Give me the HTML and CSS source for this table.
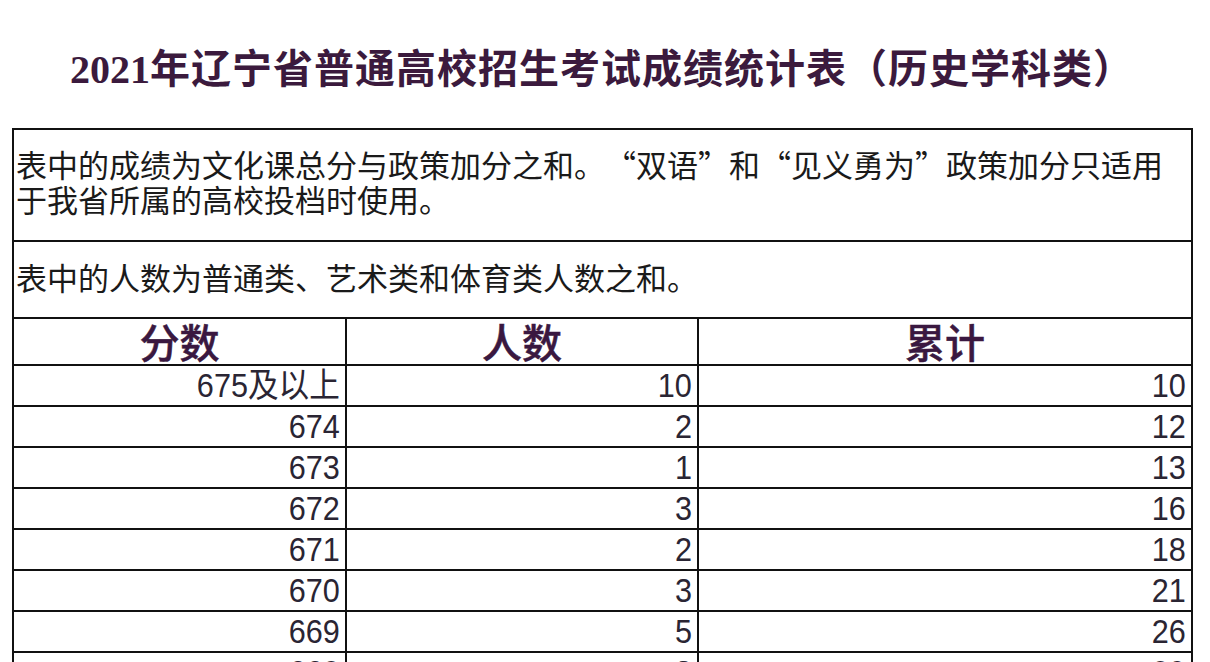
FILE: index.html
```html
<!DOCTYPE html>
<html lang="zh-CN">
<head>
<meta charset="utf-8">
<title>2021年辽宁省普通高校招生考试成绩统计表（历史学科类）</title>
<link rel="stylesheet" href="styles.css">
</head>
<body>
<h1 class="title"><span class="title-num">2021</span>年辽宁省普通高校招生考试成绩统计表（历史学科类）</h1>
<div class="sheet">
  <div class="note note-1">表中的成绩为文化课总分与政策加分之和。“双语”和“见义勇为”政策加分只适用<br>于我省所属的高校投档时使用。</div>
  <div class="note note-2">表中的人数为普通类、艺术类和体育类人数之和。</div>
  <div class="head">分数</div>
  <div class="head">人数</div>
  <div class="head">累计</div>
  <div class="cell"><span class="val">675及以上</span></div><div class="cell"><span class="val">10</span></div><div class="cell"><span class="val">10</span></div>
  <div class="cell"><span class="val">674</span></div><div class="cell"><span class="val">2</span></div><div class="cell"><span class="val">12</span></div>
  <div class="cell"><span class="val">673</span></div><div class="cell"><span class="val">1</span></div><div class="cell"><span class="val">13</span></div>
  <div class="cell"><span class="val">672</span></div><div class="cell"><span class="val">3</span></div><div class="cell"><span class="val">16</span></div>
  <div class="cell"><span class="val">671</span></div><div class="cell"><span class="val">2</span></div><div class="cell"><span class="val">18</span></div>
  <div class="cell"><span class="val">670</span></div><div class="cell"><span class="val">3</span></div><div class="cell"><span class="val">21</span></div>
  <div class="cell"><span class="val">669</span></div><div class="cell"><span class="val">5</span></div><div class="cell"><span class="val">26</span></div>
  <div class="cell"><span class="val">668</span></div><div class="cell"><span class="val">3</span></div><div class="cell"><span class="val">29</span></div>
  <div class="cell"><span class="val">667</span></div><div class="cell"><span class="val">4</span></div><div class="cell"><span class="val">33</span></div>
</div>
</body>
</html>
```
FILE: styles.css
```css
html, body {
  margin: 0;
  padding: 0;
  background: #ffffff;
  overflow: hidden;
  height: 662px;
}

body {
  font-family: "Noto Sans CJK SC", "Noto Sans", sans-serif;
  color: #1a1a1a;
  text-spacing-trim: space-all;
}

.title {
  margin: 50px 0 38px 0;
  padding-left: 70px;
  height: 40px;
  font-size: 40px;
  line-height: 40px;
  font-weight: 700;
  color: #3b1a3d;
  white-space: nowrap;
  font-family: "Liberation Serif", "Noto Sans CJK SC", serif;
  font-feature-settings: "fwid" 1;
  letter-spacing: 1px;
}

.title-num {
  font-family: "Liberation Serif", serif;
  font-weight: 700;
  letter-spacing: 0;
}

.sheet {
  margin-left: 12px;
  width: 1179px;
  display: grid;
  grid-template-columns: 333px 352px 494px;
  grid-template-rows: 112px 77px 47px;
  grid-auto-rows: 41px;
  border-left: 2px solid #111;
  border-top: 2px solid #111;
}

.sheet > div {
  border-right: 2px solid #111;
  border-bottom: 2px solid #111;
  overflow: hidden;
}

.note {
  grid-column: 1 / 4;
  font-size: 31px;
  line-height: 35px;
  padding-left: 2px;
  color: #1a1a1a;
  white-space: nowrap;
  font-feature-settings: "fwid" 1;
}

.note-1 {
  padding-top: 16px;
}

.note-2 {
  padding-top: 17px;
}

.head {
  text-align: center;
  font-size: 40px;
  line-height: 45px;
  font-weight: 500;
  color: #3a1840;
  -webkit-text-stroke: 0.5px #3a1840;
}

.cell {
  text-align: right;
  padding-right: 5px;
  font-family: "Liberation Sans", "Noto Sans CJK SC", sans-serif;
  font-size: 34px;
  line-height: 39px;
  color: #2a2533;
}

.val {
  display: inline-block;
  transform: scaleX(0.9);
  transform-origin: right center;
}
```
